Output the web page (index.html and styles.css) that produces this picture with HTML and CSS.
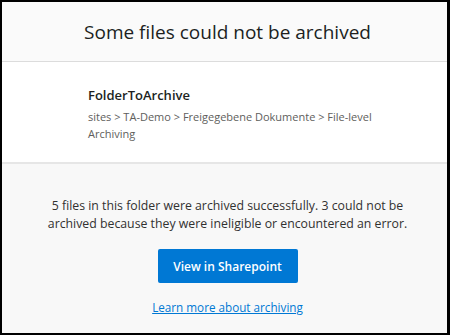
FILE: index.html
```html
<!DOCTYPE html>
<html lang="en">
<head>
    <meta charset="utf-8" />
    <title>Archive result</title>
    <link rel="stylesheet" href="styles.css">
</head>
<body>
    <div class="dialog">
        <div class="dialog-header">
            <h1>Some files could not be archived</h1>
        </div>

        <div class="folder">
            <div class="folder-name">FolderToArchive</div>
            <div class="folder-path">sites &gt; TA-Demo &gt; Freigegebene Dokumente &gt; File-level Archiving</div>
        </div>

        <div class="dialog-footer">
            <p class="summary">
                5 files in this folder were archived successfully. 3 could not be
                archived because they were ineligible or encountered an error.
            </p>
            <button class="btn-primary">View in Sharepoint</button>
            <a class="learn-more" href="#">Learn more about archiving</a>
        </div>
    </div>
</body>
</html>
```

FILE: styles.css
```css
* {
    margin: 0;
    padding: 0;
    box-sizing: border-box;
}

body {
    font-family: "Open Sans", "Noto Sans", Arial, sans-serif;
    color: #323130;
    width: 450px;
    height: 335px;
}

.dialog {
    width: 450px;
    height: 335px;
    border: 2px solid #000;
    border-right-width: 3px;
    display: flex;
    flex-direction: column;
    background: #f8f8f8;
}

.dialog-header {
    height: 60px;
    flex-shrink: 0;
    background: #fafafa;
    border-bottom: 1px solid #dcdcdc;
    padding-left: 6px;
    display: flex;
    align-items: center;
    justify-content: center;
}

h1 {
    font-size: 19px;
    font-weight: 500;
    color: #201f1e;
}

.folder {
    height: 102px;
    flex-shrink: 0;
    background: #fff;
    border-bottom: 2px solid #e6e6e6;
    padding: 24px 60px 0 86px;
}

.folder-name {
    font-size: 13px;
    font-weight: 600;
    color: #201f1e;
    margin-bottom: 4px;
}

.folder-path {
    font-size: 11px;
    line-height: 17px;
    color: #605e5c;
}

.dialog-footer {
    flex: 1;
    display: flex;
    flex-direction: column;
    align-items: center;
    padding-top: 33px;
    padding-left: 6px;
}

.summary {
    font-size: 12.3px;
    line-height: 18px;
    text-align: center;
    color: #323130;
    width: 380px;
}

.btn-primary {
    margin-top: 16px;
    width: 140px;
    height: 34px;
    background: #0078d4;
    color: #fff;
    border: none;
    border-radius: 2px;
    font-family: inherit;
    font-size: 12px;
    font-weight: 600;
}

.learn-more {
    margin-top: 16px;
    font-size: 11.7px;
    color: #0078d4;
    text-decoration: underline;
}
```
